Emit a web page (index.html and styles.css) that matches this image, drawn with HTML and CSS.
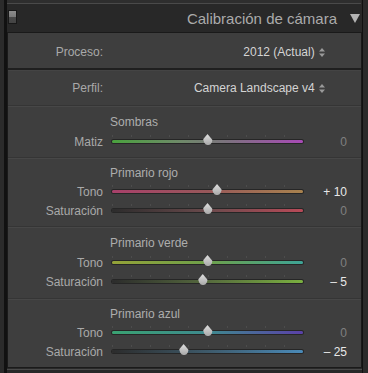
FILE: index.html
```html
<!DOCTYPE html>
<html>
  <head>
    <title>Calibración de cámara</title>
    <link rel="stylesheet" href="styles.css">
  </head>
  <body>
    <div class="sidebar">
      <div class="topStrip"></div>

      <div class="panelHeader">
        <span class="soloSwitch"></span>
        <span class="panelTitle">Calibración de cámara</span>
        <svg class="collapseArrow" width="10" height="9" viewBox="0 0 10 9"><polygon points="0,0 10,0 5,9" fill="#b4b4b4"/></svg>
      </div>

      <div class="panelBody">
        <div class="popupRow popupRow-first">
          <span class="rowLabel">Proceso:</span>
          <span class="popupValue">2012 (Actual)
            <svg class="popupArrows" width="6" height="9" viewBox="0 0 6 9"><polygon points="0,3.5 6,3.5 3,0" fill="#9a9a9a"/><polygon points="0,5.5 6,5.5 3,9" fill="#9a9a9a"/></svg>
          </span>
        </div>
        <div class="popupRow">
          <span class="rowLabel">Perfil:</span>
          <span class="popupValue">Camera Landscape v4
            <svg class="popupArrows" width="6" height="9" viewBox="0 0 6 9"><polygon points="0,3.5 6,3.5 3,0" fill="#9a9a9a"/><polygon points="0,5.5 6,5.5 3,9" fill="#9a9a9a"/></svg>
          </span>
        </div>

        <!-- Sombras -->
        <div class="sliderGroup sliderGroup-shadows">
          <div class="groupTitle">Sombras</div>
          <div class="sliderRow">
            <span class="rowLabel">Matiz</span>
            <div class="track track-shadowTint"><span class="thumb" style="left: 50%"></span></div>
            <span class="sliderValue">0</span>
          </div>
        </div>

        <!-- Primario rojo -->
        <div class="sliderGroup">
          <div class="groupTitle">Primario rojo</div>
          <div class="sliderRow">
            <span class="rowLabel">Tono</span>
            <div class="track track-redHue"><span class="thumb" style="left: 55%"></span></div>
            <span class="sliderValue changed">+ 10</span>
          </div>
          <div class="sliderRow">
            <span class="rowLabel">Saturación</span>
            <div class="track track-redSat"><span class="thumb" style="left: 50%"></span></div>
            <span class="sliderValue">0</span>
          </div>
        </div>

        <!-- Primario verde -->
        <div class="sliderGroup sliderGroup-green">
          <div class="groupTitle">Primario verde</div>
          <div class="sliderRow">
            <span class="rowLabel">Tono</span>
            <div class="track track-greenHue"><span class="thumb" style="left: 50%"></span></div>
            <span class="sliderValue">0</span>
          </div>
          <div class="sliderRow">
            <span class="rowLabel">Saturación</span>
            <div class="track track-greenSat"><span class="thumb" style="left: 47.5%"></span></div>
            <span class="sliderValue changed">&ndash; 5</span>
          </div>
        </div>

        <!-- Primario azul -->
        <div class="sliderGroup">
          <div class="groupTitle">Primario azul</div>
          <div class="sliderRow">
            <span class="rowLabel">Tono</span>
            <div class="track track-blueHue"><span class="thumb" style="left: 50%"></span></div>
            <span class="sliderValue">0</span>
          </div>
          <div class="sliderRow">
            <span class="rowLabel">Saturación</span>
            <div class="track track-blueSat"><span class="thumb" style="left: 37.5%"></span></div>
            <span class="sliderValue changed">&ndash; 25</span>
          </div>
        </div>
      </div>
      <div class="bottomStrip"></div>
    </div>
  </body>
</html>
```

FILE: styles.css
```css
body {
  margin: 0;
  background-color: #2b2b2b;
  font-family: "Liberation Sans", Arial, sans-serif;
  font-size: 12px;
}
.sidebar {
  margin-left: 4px;
  width: 355px;
  height: 373px;
  border-left: 3px solid #111111;
  border-right: 1px solid #111111;
  background-color: #282828;
}
.topStrip {
  height: 3px;
  background-color: #2e2e2e;
  border-bottom: 1px solid #4a4a4a;
  margin-right: 1px;
}
.panelHeader {
  height: 28px;
  display: flex;
  align-items: center;
}
.soloSwitch {
  width: 7px;
  height: 12px;
  margin-left: 1px;
  margin-top: -3px;
  border: 1px solid #181818;
  background: linear-gradient(#8c8c8c 0, #7a7a7a 50%, #4a4a4a 50%, #444444 100%);
}
.panelTitle {
  margin-left: auto;
  font-size: 15px;
  color: #ababab;
}
.collapseArrow {
  margin-left: 13px;
  margin-right: 2px;
}
.panelBody {
  border: 1px solid #1a1a1a;
  background-color: #3e3e3e;
}
.popupRow {
  display: flex;
  align-items: center;
  height: 35px;
  box-shadow: inset 0 1px #444444;
}
.popupRow-first {
  height: 35px;
  border-bottom: 2px solid #1f1f1f;
  box-shadow: none;
}
.popupRow-first .rowLabel, .popupRow-first .popupValue {
  margin-top: 2px;
}
.rowLabel {
  width: 95px;
  text-align: right;
  color: #a9a9a9;
}
.popupValue {
  flex: 1;
  text-align: right;
  padding-right: 36px;
  color: #d4d4d4;
}
.popupArrows {
  margin-left: 1px;
  vertical-align: -1px;
}
.sliderGroup {
  border-top: 1px solid #353535;
  box-shadow: inset 0 1px #474747;
  padding: 7px 0 6px 0;
}
.sliderGroup-shadows {
  padding: 8px 0 6px 0;
}
.sliderGroup-shadows .groupTitle {
  height: 18px;
}
.sliderGroup-green {
  padding: 8px 0 7px 0;
}
.sliderGroup-green .groupTitle {
  height: 18px;
}
.groupTitle {
  height: 17px;
  line-height: 17px;
  padding-left: 102px;
  color: #adadad;
}
.sliderRow {
  display: grid;
  grid-template-columns: 95px 191px 1fr;
  column-gap: 9px;
  align-items: center;
  height: 19px;
  padding-right: 14px;
}
.track {
  position: relative;
  height: 3px;
  border-radius: 2px;
  box-shadow: 0 0 0 1px #262626;
}
.track::before {
  content: "";
  position: absolute;
  left: 0;
  right: 0;
  top: -5px;
  height: 2px;
  background: repeating-linear-gradient(90deg, #4c4c4c 0, #4c4c4c 1px, transparent 1px, transparent 19.1px);
}
.track-shadowTint { background: linear-gradient(90deg, #4aa23e, #6e8a68 35%, #7c727e 60%, #a84ab6); }
.track-redHue { background: linear-gradient(90deg, #a8406a, #98585a 50%, #a8824e); }
.track-redSat { background: linear-gradient(90deg, #2c2c2c, #6a4a4c 50%, #b84a58); }
.track-greenHue { background: linear-gradient(90deg, #94a238, #6ea04a 50%, #3ea496); }
.track-greenSat { background: linear-gradient(90deg, #2c2c2c, #566a3e 50%, #7ab040); }
.track-blueHue { background: linear-gradient(90deg, #3aa272, #3e8a8e 50%, #5a40a8); }
.track-blueSat { background: linear-gradient(90deg, #2c2c2c, #3e5a6a 50%, #4a8ab8); }
.thumb {
  position: absolute;
  top: -6px;
  width: 10px;
  height: 11px;
  margin-left: -5px;
  background: linear-gradient(#e0e0e0, #a8a8a8);
  border-radius: 50% 50% 45% 45% / 30% 30% 70% 70%;
  clip-path: polygon(50% 0, 100% 55%, 100% 100%, 0 100%, 0 55%);
}
.sliderValue {
  text-align: right;
  color: #808080;
}
.changed {
  color: #e8e8e8;
}
.bottomStrip {
  height: 1px;
  margin-top: 1px;
  background-color: #4a4a4a;
}
```
